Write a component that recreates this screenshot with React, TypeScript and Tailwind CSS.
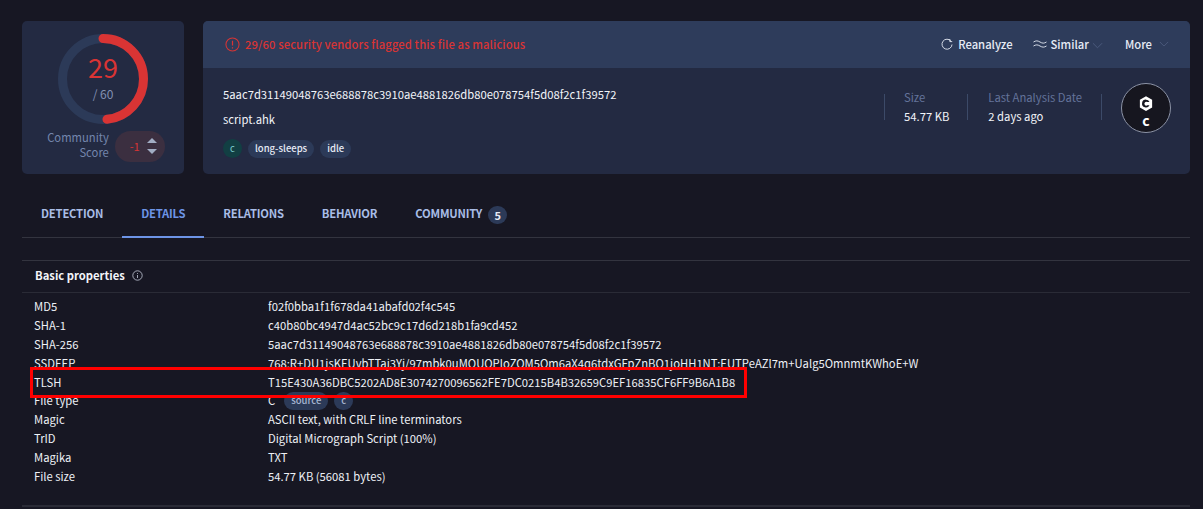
import React from 'react';

const chip = 'h-[18px] px-[7px] rounded-full bg-[#2c3a58] flex items-center leading-none text-[9.5px] font-medium';

const rows: [string, React.ReactNode][] = [
  ['MD5', 'f02f0bba1f1f678da41abafd02f4c545'],
  ['SHA-1', 'c40b80bc4947d4ac52bc9c17d6d218b1fa9cd452'],
  ['SHA-256', '5aac7d31149048763e688878c3910ae4881826db80e078754f5d08f2c1f39572'],
  ['SSDEEP', '768:R+DU1jsKEUvbTTaj3Yj/97mbk0uMQUQPloZQM5Qm6aX4q6tdxGFpZnBQ1joHH1NT:EUTPeAZl7m+Ualg5OmnmtKWhoE+W'],
  ['TLSH', 'T15E430A36DBC5202AD8E3074270096562FE7DC0215B4B32659C9EF16835CF6FF9B6A1B8'],
  [
    'File type',
    <span className="flex items-center">
      C
      <span className={`ml-[9px] text-[#a9b7d3] ${chip}`}>source</span>
      <span className={`ml-[6px] text-[#a9b7d3] ${chip}`}>c</span>
    </span>,
  ],
  ['Magic', 'ASCII text, with CRLF line terminators'],
  ['TrID', 'Digital Micrograph Script (100%)'],
  ['Magika', 'TXT'],
  ['File size', '54.77 KB (56081 bytes)'],
];

const tabs = ['DETECTION', 'DETAILS', 'RELATIONS', 'BEHAVIOR', 'COMMUNITY'];

function Ring() {
  const r = 40.5;
  const c = 2 * Math.PI * r;
  return (
    <svg width="92" height="92" viewBox="0 0 92 92" className="block">
      <circle cx="46" cy="46" r={r} fill="none" stroke="#2c3a58" strokeWidth="9" />
      <circle
        cx="46"
        cy="46"
        r={r}
        fill="none"
        stroke="#d93434"
        strokeWidth="9"
        strokeLinecap="round"
        strokeDasharray={`${c * (29 / 60)} ${c}`}
        transform="rotate(-90 46 46)"
      />
    </svg>
  );
}

export default function App() {
  return (
    <div className="relative w-[1203px] h-[509px] overflow-hidden bg-[#171723] text-white text-[11.25px] leading-[19px] font-['Noto_Sans_CJK_JP','Noto_Sans',sans-serif]">
      {/* Top cards */}
      <div className="flex pt-[21px] pl-[22px] pr-[13px] gap-[19px]">
        <div className="w-[162px] h-[153px] shrink-0 rounded-[5px] bg-[#232a42] flex flex-col items-center pt-[12px]">
          <div className="relative w-[92px] h-[92px]">
            <Ring />
            <div className="absolute inset-0 flex flex-col items-center pt-[14px]">
              <span className="text-[27px] leading-[40px] text-[#d93434]">29</span>
              <span className="text-[12px] leading-[16px] text-[#8290b3] -mt-px">/ 60</span>
            </div>
          </div>
          <div className="flex items-center mt-[5px] ml-[6px]">
            <div className="text-right text-[#7486ad] leading-[15px] mr-[6px] pb-[2px]">
              Community
              <br />
              Score
            </div>
            <div className="w-[50px] h-[31px] rounded-full bg-[#3b2f40] flex items-center justify-end pr-[8px] gap-[7px]">
              <span className="text-[#d93434]">-1</span>
              <span className="flex flex-col gap-[6px]">
                <span className="block w-0 h-0 border-x-[5px] border-x-transparent border-b-[5px] border-b-[#a2adc4]" />
                <span className="block w-0 h-0 border-x-[5px] border-x-transparent border-t-[5px] border-t-[#a2adc4]" />
              </span>
            </div>
          </div>
        </div>

        <div className="flex-1 h-[153px] rounded-[5px] bg-[#232a42] overflow-hidden">
          <div className="h-[47px] bg-[#2e3c5b] flex items-center pl-[22px] pr-[21px] pb-[1px]">
            <svg width="15" height="15" viewBox="0 0 16 16" fill="none" stroke="#d93434" strokeWidth="1.1" className="mr-[5px]">
              <circle cx="8" cy="8" r="7" />
              <path d="M8 4v5M8 11v1.2" strokeWidth="1.3" />
            </svg>
            <span className="text-[#d93434] font-medium tracking-[0.1px]">29/60 security vendors flagged this file as malicious</span>
            <div className="ml-auto flex items-center font-medium text-[#e6ebf5]">
              <svg width="12" height="12" viewBox="0 0 12 12" fill="none" stroke="#e6ebf5" strokeWidth="0.9" className="mr-[5px]">
                <path d="M10 3.2A5 5 0 1 0 11 6.5" />
                <path d="M8.8 1v2.6h2.4" />
              </svg>
              <span>Reanalyze</span>
              <svg width="14" height="8" viewBox="0 0 14 8" fill="none" stroke="#e6ebf5" strokeWidth="0.9" className="ml-[20px] mr-[4px]">
                <path d="M0.5 2C3 0.5 4.5 0.5 7 2s4 1.5 6.5 0M0.5 6C3 4.5 4.5 4.5 7 6s4 1.500 6.5 0" />
              </svg>
              <span>Similar</span>
              <svg width="11" height="7" viewBox="0 0 12 7" fill="none" stroke="#4e5d80" strokeWidth="1" className="ml-[3px] mt-[3px]">
                <path d="M1 1l5 5 5-5" />
              </svg>
              <span className="ml-[22px]">More</span>
              <svg width="10" height="6" viewBox="0 0 12 7" fill="none" stroke="#4e5d80" strokeWidth="1" className="ml-[7px]">
                <path d="M1 1l5 5 5-5" />
              </svg>
            </div>
          </div>
          <div className="flex pl-[20px] pr-[19px]">
            <div className="flex-1 pt-[17px]">
              <div className="text-[#f2f4f9]">5aac7d31149048763e688878c3910ae4881826db80e078754f5d08f2c1f39572</div>
              <div className="mt-[6px] text-[#f2f4f9]">script.ahk</div>
              <div className="flex items-center mt-[10px] gap-[6px] leading-none">
                <span className="w-[19px] h-[19px] rounded-full bg-[#123f43] text-[#7fd1d1] text-[9.5px] flex items-center justify-center">c</span>
                <span className={`text-[#e6ebf5] ${chip}`}>long-sleeps</span>
                <span className={`text-[#e6ebf5] ${chip}`}>idle</span>
              </div>
            </div>
            <div className="flex items-start pt-[15px]">
              <div className="w-px h-[26px] bg-[#3c4a68] mt-[11px]" />
              <div className="pl-[19px] pr-[18px] pt-[5px]">
                <div className="text-[#64739a]">Size</div>
                <div className="text-[#f2f4f9]">54.77 KB</div>
              </div>
              <div className="w-px h-[26px] bg-[#3c4a68] mt-[11px]" />
              <div className="pl-[20px] pr-[19px] pt-[5px]">
                <div className="text-[#64739a]">Last Analysis Date</div>
                <div className="text-[#f2f4f9]">2 days ago</div>
              </div>
              <div className="w-px h-[26px] bg-[#3c4a68] mt-[11px]" />
              <div className="ml-[19px] w-[50px] h-[50px] rounded-full bg-[#16161f] border border-[#8c93a6] flex flex-col items-center pt-[12px]">
                <svg width="14" height="16" viewBox="0 0 16 18">
                  <path fill="#fff" fillRule="evenodd" d="M8 0l7 4v9l-7 4-7-4V4zM8 4a4.5 4.5 0 1 0 4 6.500h-2.500a2.200 2.200 0 1 1 0-3.800H12A4.500 4.500 0 0 0 8 4z" />
                </svg>
                <span className="text-[14px] leading-[12px] font-bold mt-[2px]">c</span>
              </div>
            </div>
          </div>
        </div>
      </div>

      {/* Tabs */}
      <div className="mx-[22px] mt-[21px] mr-[13px] h-[43px] border-b border-[#33343f] flex font-semibold tracking-[-0.2px] text-[#a9bde6]">
        {tabs.map((t, i) => (
          <div
            key={t}
            className={
              i === 1
                ? 'h-[43px] px-[19px] pt-[9px] border-b-2 border-[#6d94e6] text-[#6d94e6]'
                : 'h-[43px] px-[19px] pt-[9px] flex items-start'
            }
          >
            {t}
            {t === 'COMMUNITY' && (
              <span className="ml-[6px] w-[19px] h-[18px] rounded-full bg-[#2c3a58] text-[#e6ebf5] text-[11px] flex items-center justify-center mt-[2px] leading-none">5</span>
            )}
          </div>
        ))}
      </div>

      {/* Basic properties */}
      <div className="mx-[22px] mr-[13px] mt-[22px] border-t border-[#33343f]">
        <div className="h-[32px] border-b border-[#2a2b36] pl-[13px] pb-[2px] flex items-center font-bold text-[#f2f4f9]">
          Basic properties
          <svg width="11" height="11" viewBox="0 0 11 11" fill="none" stroke="#c6ccd9" strokeWidth="0.8" className="ml-[7px]">
            <circle cx="5.500" cy="5.500" r="4.700" />
            <path d="M5.500 5v3M5.500 3v0.900" />
          </svg>
        </div>
        <div className="pt-[4px] pl-[12px] h-[214px] border-b-2 border-[#2a2b36]">
          {rows.map(([k, v]) => (
            <div key={k} className="flex h-[18.900px] items-center text-[#eef1f6] whitespace-nowrap">
              <span className="w-[234px] shrink-0">{k}</span>
              {v}
            </div>
          ))}
        </div>
      </div>

      {/* Red annotation drawn over the page */}
      <div className="absolute left-[30px] top-[367px] w-[717px] h-[31px] border-[3px] border-[#ff0000]" />
    </div>
  );
}
